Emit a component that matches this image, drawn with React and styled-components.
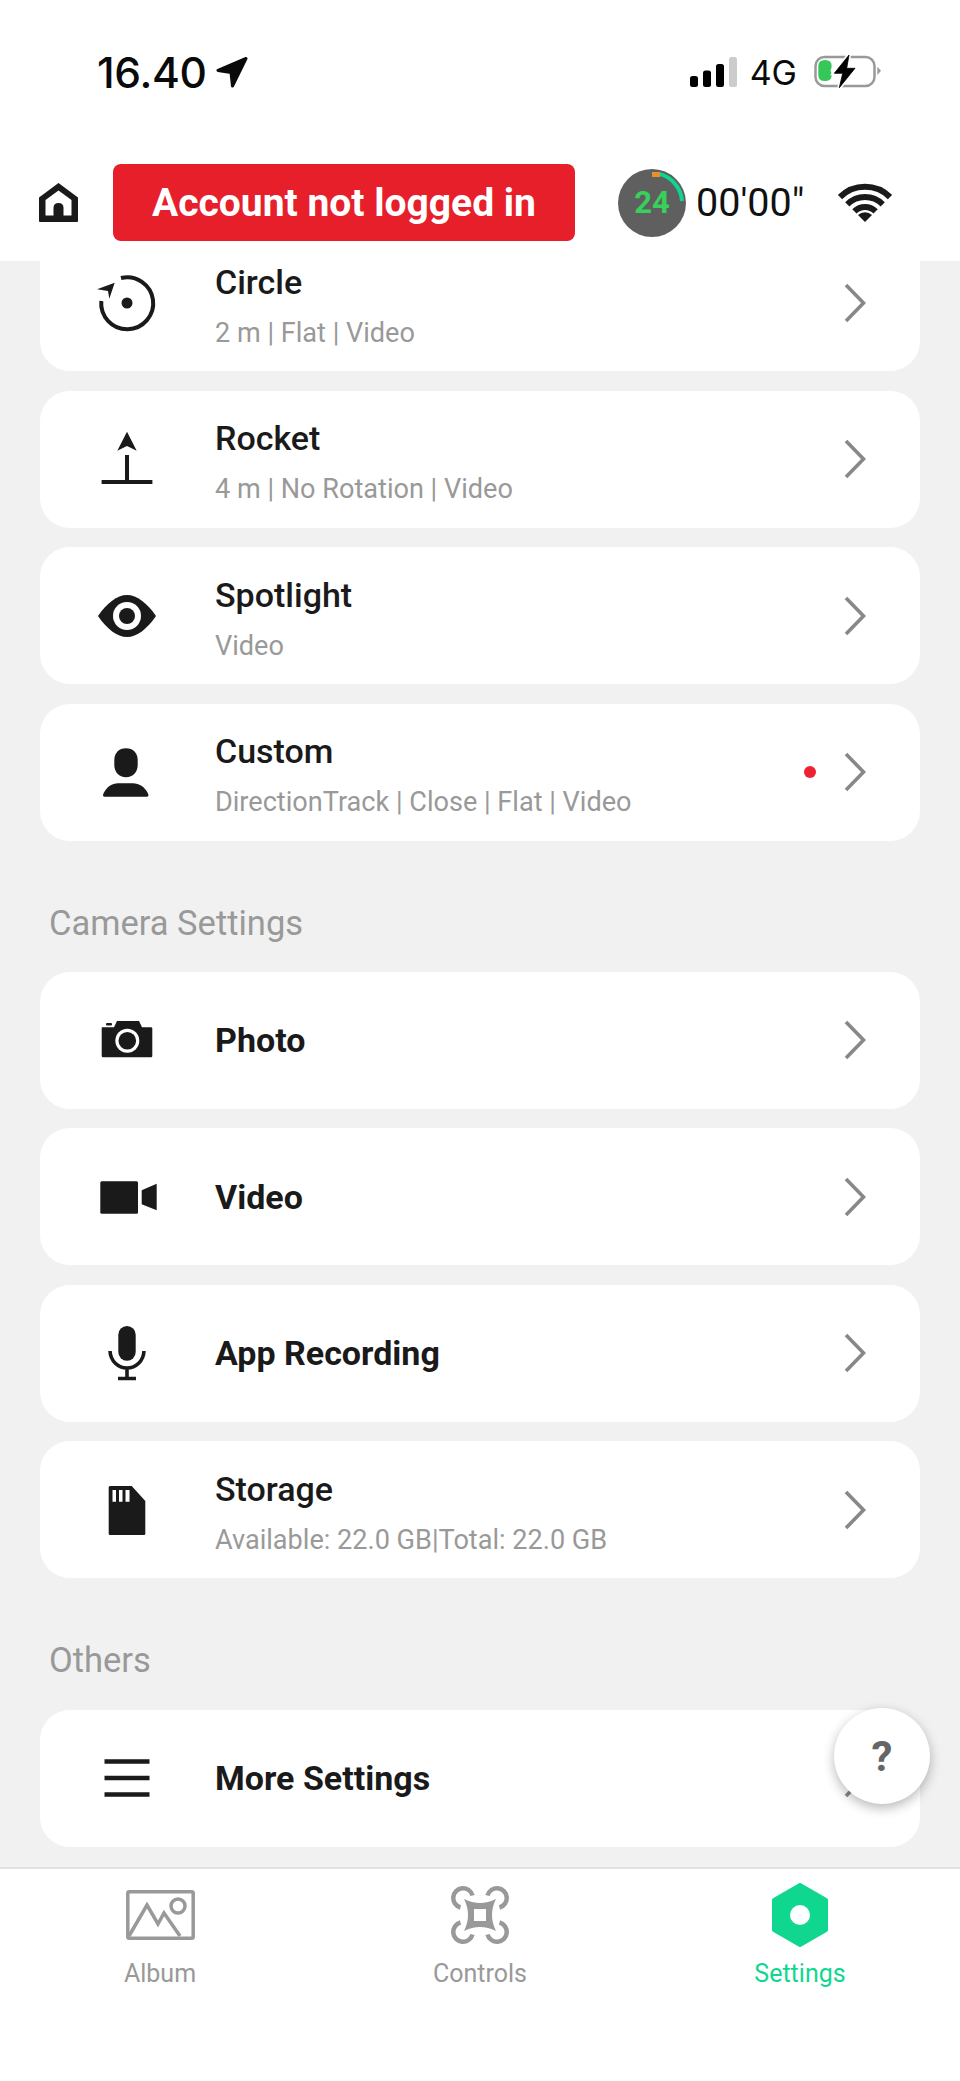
import React from 'react';
import styled, { createGlobalStyle } from 'styled-components';

const Global = createGlobalStyle`
  html, body { margin: 0; padding: 0; background: #fff; }
  * { box-sizing: border-box; }
`;

const Page = styled.div`
  position: relative;
  width: 960px;
  height: 2081px;
  overflow: hidden;
  display: flex;
  flex-direction: column;
  background: #fff;
  font-family: Roboto, "Liberation Sans", sans-serif;
`;

const Header = styled.header`
  position: relative;
  z-index: 1;
  flex: 0 0 261px;
  background: #fff;
`;

const StatusBar = styled.div`
  height: 144px;
  display: flex;
  align-items: center;
  padding: 0 79px 0 97px;
`;

const Clock = styled.span`
  font-family: Inter, sans-serif;
  font-weight: 500;
  font-size: 42.5px;
  letter-spacing: -0.3px;
  color: #0a0a0a;
`;

const Network = styled.span`
  font-family: Inter, sans-serif;
  font-size: 34px;
  color: #0a0a0a;
  margin: 0 17px 0 13px;
`;

const Spacer = styled.div`
  flex: 1;
`;

const TopBar = styled.div`
  height: 117px;
  display: flex;
  align-items: center;
  padding-left: 39px;
`;

const LoginButton = styled.div`
  width: 462px;
  height: 77px;
  margin-left: 35px;
  background: #e61f2b;
  border-radius: 8px;
  color: #fff;
  font-size: 39px;
  font-weight: 700;
  display: flex;
  align-items: center;
  justify-content: center;
`;

const Gauge = styled.div`
  position: relative;
  width: 68px;
  height: 68px;
  margin-left: 43px;
  border-radius: 50%;
  background: #5f5f5f;
  color: #37d05a;
  font-size: 31px;
  font-weight: 700;
  display: flex;
  align-items: center;
  justify-content: center;
  svg { position: absolute; inset: 0; }
`;

const Timer = styled.span`
  width: 130px;
  margin-left: 10px;
  font-size: 39.5px;
  color: #111;
`;

const Main = styled.main`
  flex: 1;
  min-height: 0;
  overflow: hidden;
  background: #f1f1f1;
  padding: 0 40px;
`;

const List = styled.div`
  display: flex;
  flex-direction: column;
  gap: 19.5px;
  &:first-child { margin-top: -27px; }
`;

const SectionLabel = styled.div`
  height: 40px;
  margin: 62px 0 ${p => p.$after}px 9px;
  line-height: 40px;
  font-size: 34.5px;
  color: #999;
`;

const Card = styled.div`
  height: 137px;
  background: #fff;
  border-radius: 30px;
  display: flex;
  align-items: center;
  padding: 0 54px 0 47px;
`;

const IconSlot = styled.div`
  width: 80px;
  height: 80px;
  margin-right: 48px;
  flex: none;
  svg { display: block; }
`;

const Texts = styled.div`
  flex: 1;
  display: flex;
  flex-direction: column;
  gap: 12px;
  padding-top: ${p => (p.$double ? 6 : 0)}px;
`;

const Title = styled.div`
  font-size: 34px;
  line-height: 42px;
  font-weight: ${p => (p.$strong ? 700 : 500)};
  color: #1a1a1a;
`;

const Sub = styled.div`
  font-size: 27.1px;
  line-height: 36px;
  color: #999;
`;

const RedDot = styled.span`
  width: 12px;
  height: 12px;
  border-radius: 50%;
  background: #ee2233;
  margin-right: 28px;
`;

const TabBar = styled.nav`
  flex: 0 0 214px;
  display: grid;
  grid-template-columns: repeat(3, 1fr);
  border-top: 2px solid #e2e2e2;
  background: #fff;
`;

const Tab = styled.div`
  display: flex;
  flex-direction: column;
  align-items: center;
  font-size: 25px;
  color: ${p => (p.$active ? '#10d78f' : '#999')};
`;

const TabIcon = styled.div`
  height: 64px;
  margin: 14px 0 12px;
  display: flex;
  align-items: center;
`;

const HelpButton = styled.div`
  position: absolute;
  left: 834px;
  top: 1708px;
  width: 96px;
  height: 96px;
  border-radius: 50%;
  background: #fff;
  box-shadow: 0 4px 12px rgba(0, 0, 0, 0.28);
  color: #666;
  font-size: 42px;
  font-weight: 700;
  display: flex;
  align-items: center;
  justify-content: center;
`;

const INK = '#1a1a1a';

const Icon80 = ({ children }) => (
  <svg width="80" height="80" viewBox="0 0 80 80" fill={INK}>{children}</svg>
);

const CircleIcon = () => (
  <Icon80>
    <path d="M34 15 A26 26 0 1 1 14.3 38" fill="none" stroke={INK} strokeWidth="4" />
    <circle cx="40" cy="40" r="5.5" />
    <path d="M10 26.3 L27.7 19.7 L22.3 35.7 L21 28Z" />
  </Icon80>
);

const RocketIcon = () => (
  <Icon80>
    <path d="M40 12.7 L49.7 31.7 L40 27 L30.3 31.7Z" />
    <path d="M40 36 V63 M14.6 63 H65.4" fill="none" stroke={INK} strokeWidth="4" />
  </Icon80>
);

const EyeIcon = () => (
  <Icon80>
    <path d="M11 40 C20 27 30 19 40 19 C50 19 60 27 69 40 C60 53 50 61 40 61 C30 61 20 53 11 40Z" />
    <circle cx="40" cy="40" r="14" fill="#fff" />
    <circle cx="40" cy="40" r="8" />
  </Icon80>
);

const PersonIcon = () => (
  <Icon80>
    <path d="M39 16.3 C46 16.3 50.7 21 50.7 28 V33 C50.7 40 46 45.3 39 45.3 C32 45.3 27.3 40 27.3 33 V28 C27.3 21 32 16.3 39 16.3Z" />
    <path d="M17.5 64.7 C15.5 64.7 15.8 62.5 17 60.5 C20 55 25 51.3 31 51.3 H46 C52 51.3 57.5 55 60.5 60.5 C61.7 62.5 62 64.7 60 64.7Z" />
  </Icon80>
);

const CameraIcon = () => (
  <Icon80>
    <rect x="19" y="23" width="6" height="2.4" rx="1" />
    <path d="M15 27.3 H27 L30 21 H52 L55 27.3 H64 Q65.3 27.3 65.3 28.6 V56 Q65.3 57.3 64 57.3 H16 Q14.7 57.3 14.7 56 V28.6 Q14.7 27.3 15 27.3Z" />
    <circle cx="40.3" cy="40.7" r="12" fill="#fff" />
    <circle cx="40.3" cy="40.7" r="8.8" />
  </Icon80>
);

const VideoIcon = () => (
  <Icon80>
    <rect x="13.3" y="24.3" width="37.7" height="32.4" rx="1.5" />
    <path d="M54.7 33.3 L69.7 26.7 V53.3 L54.7 47.3Z" />
  </Icon80>
);

const MicIcon = () => (
  <Icon80>
    <rect x="31.3" y="13" width="17.4" height="34.7" rx="8.7" />
    <path d="M23 38 C23.5 48 31 55 40 55 C49 55 56.5 48 57 38 M40 55 V65 M31 65.5 H49" fill="none" stroke={INK} strokeWidth="3.6" />
  </Icon80>
);

const SdIcon = () => (
  <Icon80>
    <path d="M23 16 H44.7 L58.3 31 V63.5 Q58.3 65 57 65 H23 Q21.7 65 21.7 63.5 V17.5 Q21.7 16 23 16Z" />
    <path d="M25.5 20 H29 V31.7 H25.5Z M32 20 H35.5 V31.7 H32Z M38.5 20 H42.5 V31.7 H38.5Z" fill="#fff" />
  </Icon80>
);

const MenuIcon = () => (
  <Icon80>
    <path d="M17.5 23.5 H62.5 M17.5 40 H62.5 M17.5 56.5 H62.5" fill="none" stroke={INK} strokeWidth="4.5" />
  </Icon80>
);

const Chevron = () => (
  <svg width="22" height="40" viewBox="0 0 22 40" fill="none">
    <path d="M2 2 L19.5 20 L2 38" stroke="#888" strokeWidth="3.6" />
  </svg>
);

const ArrowSvg = styled.svg`
  margin-left: 9px;
`;

const LocationArrow = () => (
  <ArrowSvg width="32" height="32" viewBox="0 0 32 32">
    <path d="M30 2.5 L2 14.5 L15 16.5 L16.5 30Z" fill="#0a0a0a" stroke="#0a0a0a" strokeWidth="3" strokeLinejoin="round" />
  </ArrowSvg>
);

const SignalBars = () => (
  <svg width="47" height="31" viewBox="0 0 47 31">
    <rect x="0" y="19" width="8" height="11" rx="2.5" fill="#000" />
    <rect x="13" y="13.5" width="8" height="16.5" rx="2.5" fill="#000" />
    <rect x="26" y="7" width="8" height="23" rx="2.5" fill="#000" />
    <rect x="39" y="0" width="8" height="30" rx="2.5" fill="#ccc" />
  </svg>
);

const BOLT = 'M35 0 L20.3 18.3 L28.7 18.3 L25.3 32.7 L41 13.3 L32.7 13.3Z';

const Battery = () => (
  <svg width="67" height="34" viewBox="0 0 67 34">
    <rect x="1.5" y="2" width="59" height="29" rx="9" fill="none" stroke="#999" strokeWidth="2.5" />
    <path d="M11 5 Q17.7 5 17.7 11 Q17.7 13 16.5 15.5 Q17.7 18 17.7 20 Q17.7 26 11 26 Q4.3 26 4.3 20 V11 Q4.3 5 11 5Z" fill="#35c759" />
    <path d="M63.3 11.7 L67 15.8 L63.3 20Z" fill="#999" />
    <path d={BOLT} fill="#fff" stroke="#fff" strokeWidth="4" />
    <path d={BOLT} fill="#000" stroke="#000" strokeWidth="0.8" />
  </svg>
);

const HomeIcon = () => (
  <svg width="39" height="39" viewBox="0 0 39 39">
    <path d="M19.5 0 L39 14.5 V38 Q39 39 38 39 H1 Q0 39 0 38 V14.5Z" fill={INK} />
    <path d="M19.5 7.5 L32.5 17 V32.5 H6.5 V17Z" fill="#fff" />
    <path d="M14.5 39 V25 Q14.5 20 19.5 20 Q24.5 20 24.5 25 V39Z" fill={INK} />
  </svg>
);

const WifiSvg = styled.svg`
  margin-left: 12px;
`;

const WifiIcon = () => (
  <WifiSvg width="54" height="39" viewBox="0 0 54 39" fill="none">
    <g stroke={INK} strokeWidth="6">
      <path d="M2 14 A35.5 35.5 0 0 1 52 14" />
      <path d="M9.3 21.3 A25 25 0 0 1 44.7 21.3" />
      <path d="M16.4 28.4 A15 15 0 0 1 37.6 28.4" />
    </g>
    <path d="M27 39 L20 32 A10 10 0 0 1 34 32Z" fill={INK} />
  </WifiSvg>
);

const GaugeArc = () => (
  <svg width="68" height="68" viewBox="0 0 68 68" fill="none">
    <path d="M41 4.9 A30 30 0 0 1 64 32" stroke="#0fd68f" strokeWidth="4" />
    <rect x="34" y="3" width="8" height="5" fill="#e8902a" />
  </svg>
);

const AlbumIcon = () => (
  <svg width="69" height="50" viewBox="0 0 69 50" fill="none" stroke="#999" strokeWidth="3.5">
    <rect x="1.8" y="1.8" width="65.4" height="46.4" rx="1.5" />
    <path d="M3 46 L21 15 L32 34 L38 23 L54 46" />
    <circle cx="52" cy="16" r="7" />
  </svg>
);

const Rotor = () => (
  <path d="M22.5 10.5 A9.8 9.8 0 1 0 10.5 22.5" fill="none" stroke="#999" strokeWidth="4.5" />
);

const DroneIcon = () => (
  <svg width="60" height="60" viewBox="0 0 60 60">
    <Rotor />
    <g transform="matrix(-1 0 0 1 60 0)"><Rotor /></g>
    <g transform="matrix(1 0 0 -1 0 60)"><Rotor /></g>
    <g transform="matrix(-1 0 0 -1 60 60)"><Rotor /></g>
    <path fillRule="evenodd" fill="#999" d="M14 14 Q30 22 46 14 Q38 30 46 46 Q30 38 14 46 Q22 30 14 14Z M24 24 V36 H36 V24Z" />
  </svg>
);

const SettingsIcon = () => (
  <svg width="58" height="64" viewBox="0 0 58 64">
    <path d="M29 2 L55 17 V47 L29 62 L3 47 V17Z" fill="#10d78f" stroke="#10d78f" strokeWidth="4" strokeLinejoin="round" />
    <circle cx="29" cy="32" r="10" fill="#fff" />
  </svg>
);

const Row = ({ icon, title, sub, dot, strong }) => (
  <Card>
    <IconSlot>{icon}</IconSlot>
    <Texts $double={!!sub}>
      <Title $strong={strong}>{title}</Title>
      {sub && <Sub>{sub}</Sub>}
    </Texts>
    {dot && <RedDot />}
    <Chevron />
  </Card>
);

export default function App() {
  return (
    <Page>
      <Global />
      <Header>
        <StatusBar>
          <Clock>16.40</Clock>
          <LocationArrow />
          <Spacer />
          <SignalBars />
          <Network>4G</Network>
          <Battery />
        </StatusBar>
        <TopBar>
          <HomeIcon />
          <LoginButton>Account not logged in</LoginButton>
          <Gauge>
            <GaugeArc />
            24
          </Gauge>
          <Timer>00'00"</Timer>
          <WifiIcon />
        </TopBar>
      </Header>

      <Main>
        <List>
          <Row icon={<CircleIcon />} title="Circle" sub="2 m | Flat | Video" />
          <Row icon={<RocketIcon />} title="Rocket" sub="4 m | No Rotation | Video" />
          <Row icon={<EyeIcon />} title="Spotlight" sub="Video" />
          <Row icon={<PersonIcon />} title="Custom" sub="DirectionTrack | Close | Flat | Video" dot />
        </List>

        <SectionLabel $after={29}>Camera Settings</SectionLabel>
        <List>
          <Row icon={<CameraIcon />} title="Photo" strong />
          <Row icon={<VideoIcon />} title="Video" strong />
          <Row icon={<MicIcon />} title="App Recording" strong />
          <Row icon={<SdIcon />} title="Storage" sub="Available: 22.0 GB|Total: 22.0 GB" />
        </List>

        <SectionLabel $after={29.5}>Others</SectionLabel>
        <List>
          <Row icon={<MenuIcon />} title="More Settings" strong />
        </List>
      </Main>

      <TabBar>
        <Tab>
          <TabIcon><AlbumIcon /></TabIcon>
          Album
        </Tab>
        <Tab>
          <TabIcon><DroneIcon /></TabIcon>
          Controls
        </Tab>
        <Tab $active>
          <TabIcon><SettingsIcon /></TabIcon>
          Settings
        </Tab>
      </TabBar>

      <HelpButton>?</HelpButton>
    </Page>
  );
}
